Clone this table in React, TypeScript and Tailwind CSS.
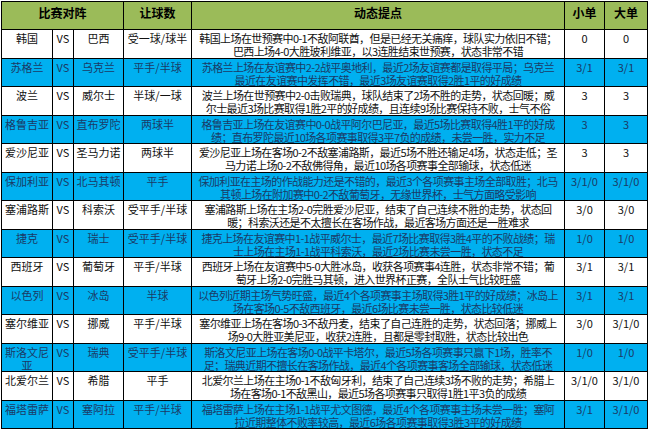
import React from 'react';

interface MatchRow {
  home: string;
  away: string;
  handicap: string;
  notes: [string, string];
  small: string;
  big: string;
}

const ROWS: MatchRow[] = [
  { home: '韩国', away: '巴西', handicap: '受一球/球半', notes: ['韩国上场在世预赛中0-1不敌阿联酋，但是已经无关痛痒，球队实力依旧不错；', '巴西上场4-0大胜玻利维亚，以3连胜结束世预赛，状态非常不错'], small: '0', big: '0' },
  { home: '苏格兰', away: '乌克兰', handicap: '平手/半球', notes: ['苏格兰上场在友谊赛中2-2战平奥地利，最近2场友谊赛都是取得平局；乌克兰', '最近在友谊赛中发挥不错，最近3场友谊赛取得2胜1平的好成绩'], small: '3/1', big: '3/1' },
  { home: '波兰', away: '威尔士', handicap: '半球/一球', notes: ['波兰上场在世预赛中2-0击败瑞典，球队结束了2场不胜的走势，状态回暖；威', '尔士最近3场比赛取得1胜2平的好成绩，且连续9场比赛保持不败，士气不俗'], small: '3', big: '3' },
  { home: '格鲁吉亚', away: '直布罗陀', handicap: '两球半', notes: ['格鲁吉亚上场在友谊赛中0-0战平阿尔巴尼亚，最近5场比赛取得4胜1平的好成', '绩；直布罗陀最近10场各项赛事取得3平7负的成绩，未尝一胜，实力不足'], small: '3', big: '3' },
  { home: '爱沙尼亚', away: '圣马力诺', handicap: '两球半', notes: ['爱沙尼亚上场在客场0-2不敌塞浦路斯，最近5场不胜还输足4场，状态走低；圣', '马力诺上场0-2不敌佛得角，最近10场各项赛事全部输球，状态低迷'], small: '3', big: '3' },
  { home: '保加利亚', away: '北马其顿', handicap: '平手', notes: ['保加利亚在主场的作战能力还是不错的，最近3个各项赛事主场全部取胜；北马', '其顿上场在附加赛中0-2不敌葡萄牙，无缘世界杯，士气方面略受影响'], small: '3/1/0', big: '3/1/0' },
  { home: '塞浦路斯', away: '科索沃', handicap: '受平手/半球', notes: ['塞浦路斯上场在主场2-0完胜爱沙尼亚，结束了自己连续不胜的走势，状态回', '暖；科索沃还是不太擅长在客场作战，最近客场方面还是一胜难求'], small: '3/0', big: '3/0' },
  { home: '捷克', away: '瑞士', handicap: '受平手/半球', notes: ['捷克上场在友谊赛中1-1战平威尔士，最近7场比赛取得3胜4平的不败战绩；瑞', '士上场在主场1-1战平科索沃，最近2场比赛未尝一胜，状态不足'], small: '1/0', big: '1/0' },
  { home: '西班牙', away: '葡萄牙', handicap: '平手/半球', notes: ['西班牙上场在友谊赛中5-0大胜冰岛，收获各项赛事4连胜，状态非常不错；葡', '萄牙上场2-0完胜马其顿，进入世界杯正赛，全队士气比较旺盛'], small: '3/1', big: '3/1' },
  { home: '以色列', away: '冰岛', handicap: '半球', notes: ['以色列近期主场气势旺盛，最近4个各项赛事主场取得3胜1平的好成绩；冰岛上', '场在客场0-5不敌西班牙，最近6场比赛未尝一胜，状态比较低迷'], small: '3/1', big: '3/1' },
  { home: '塞尔维亚', away: '挪威', handicap: '平手/半球', notes: ['塞尔维亚上场在客场0-3不敌丹麦，结束了自己连胜的走势，状态回落；挪威上', '场9-0大胜亚美尼亚，收获2连胜，且都是零封取胜，状态比较出色'], small: '3/0', big: '3/1/0' },
  { home: '斯洛文尼亚', away: '瑞典', handicap: '受平手/半球', notes: ['斯洛文尼亚上场在客场0-0战平卡塔尔，最近5场各项赛事只赢下1场，胜率不', '足；瑞典近期不擅长在客场作战，最近4个各项赛事客场全部输球，状态低迷'], small: '1/0', big: '1/0' },
  { home: '北爱尔兰', away: '希腊', handicap: '平手', notes: ['北爱尔兰上场在主场0-1不敌匈牙利，结束了自己连续3场不败的走势；希腊上', '场在客场0-1不敌黑山，最近5场各项赛事只取得1胜1平3负的成绩'], small: '3/1/0', big: '3/1/0' },
  { home: '福塔雷萨', away: '塞阿拉', handicap: '平手/半球', notes: ['福塔雷萨上场在主场1-1战平尤文图德，最近4个各项赛事主场未尝一胜；塞阿', '拉近期整体不败率较高，最近6场各项赛事取得3胜3平的好成绩'], small: '3/1', big: '3/1/0' },
];

export default function App() {
  return (
    <div className="w-[650px] h-[432px] bg-white p-px overflow-hidden" style={{ fontFamily: '"Noto Sans CJK SC", "Noto Sans", sans-serif' }}>
      <div className="grid w-[647px] grid-cols-[50px_20px_49px_67px_372px_39px_42px] grid-rows-[27px_repeat(14,27.5px)] gap-px bg-black p-px text-[11px] leading-[13px]">
        <div className="col-span-3 bg-[#9bbb59] pt-[4px] text-center text-[12px] font-bold text-black">比赛对阵</div>
        <div className="bg-[#9bbb59] pt-[4px] text-center text-[12px] font-bold text-black">让球数</div>
        <div className="bg-[#9bbb59] pt-[4px] text-center text-[12px] font-bold text-black">动态提点</div>
        <div className="bg-[#9bbb59] pt-[4px] text-center text-[12px] font-bold text-black">小单</div>
        <div className="bg-[#9bbb59] pt-[4px] text-center text-[12px] font-bold text-black">大单</div>

        {ROWS.map((r, i) => {
          const cell = i % 2 === 1
            ? 'bg-[#00b0f0] text-[#1b3a66] pt-[2px] text-center overflow-hidden'
            : 'bg-white text-[#111] pt-[2px] text-center overflow-hidden';
          return (
            <React.Fragment key={r.home}>
              <div className={cell}>{r.home === '斯洛文尼亚' ? <>斯洛文尼<br />亚</> : r.home}</div>
              <div className={cell}>VS</div>
              <div className={cell}>{r.away}</div>
              <div className={cell}>{r.handicap}</div>
              <div className={cell + ' tracking-[-0.6px]'}>
                <div className="whitespace-nowrap">{r.notes[0]}</div>
                <div className="whitespace-nowrap">{r.notes[1]}</div>
              </div>
              <div className={cell}>{r.small}</div>
              <div className={cell}>{r.big}</div>
            </React.Fragment>
          );
        })}
      </div>
    </div>
  );
}
